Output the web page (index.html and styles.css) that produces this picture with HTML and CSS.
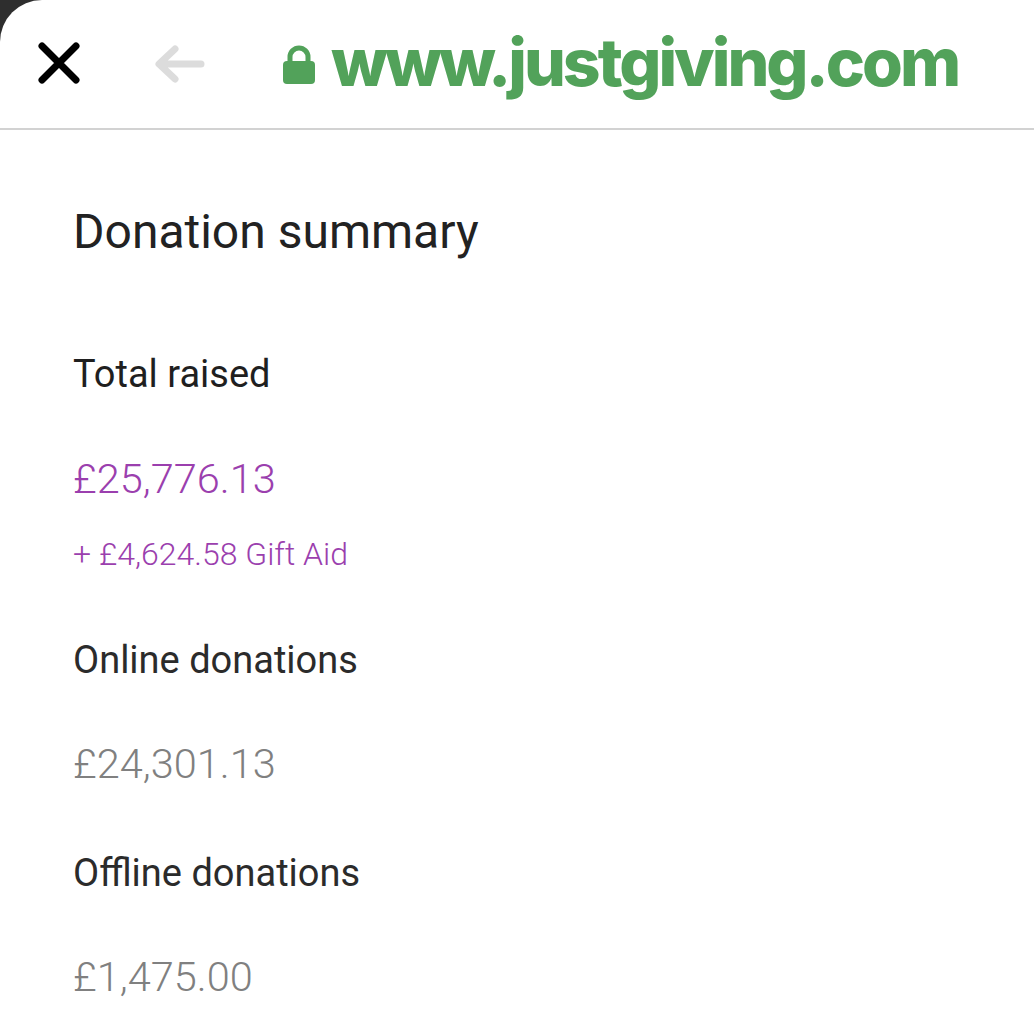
FILE: index.html
```html
<!DOCTYPE html>
<html lang="en">
<head>
  <meta charset="UTF-8" />
  <meta name="viewport" content="width=device-width, initial-scale=1.0" />
  <title>JustGiving - Donation summary</title>
  <link rel="stylesheet" href="styles.css">
</head>
<body>

  <div class="sheet">
    <!-- Barra do navegador -->
    <header class="browser-bar">
      <button class="icon-btn close" aria-label="Close">
        <svg width="48" height="48" viewBox="0 0 48 48">
          <path d="M7 7 L41 41 M41 7 L7 41" stroke="#000" stroke-width="7" stroke-linecap="round" fill="none"/>
        </svg>
      </button>
      <button class="icon-btn back" aria-label="Back">
        <svg width="52" height="40" viewBox="0 0 52 40">
          <path d="M48 20 H8 M22 5 L6 20 L22 35" stroke="#dcdcdc" stroke-width="7" stroke-linecap="round" stroke-linejoin="round" fill="none"/>
        </svg>
      </button>
      <div class="address">
        <svg class="lock" width="34" height="40" viewBox="0 0 34 40">
          <path d="M8 17 V12 a9 9 0 0 1 18 0 V17" stroke="#52a25a" stroke-width="5" fill="none"/>
          <rect x="1" y="16" width="32" height="23" rx="4" fill="#52a25a"/>
        </svg>
        <span class="url">www.justgiving.com</span>
      </div>
    </header>

    <!-- Resumo -->
    <main class="summary">
      <h1>Donation summary</h1>

      <div class="group">
        <h2 class="label strong">Total raised</h2>
        <p class="amount total">£25,776.13</p>
        <p class="gift-aid">+ £4,624.58 Gift Aid</p>
      </div>

      <div class="group">
        <h2 class="label">Online donations</h2>
        <p class="amount">£24,301.13</p>
      </div>

      <div class="group">
        <h2 class="label">Offline donations</h2>
        <p class="amount">£1,475.00</p>
      </div>
    </main>
  </div>

</body>
</html>
```

FILE: styles.css
```css
* {
  box-sizing: border-box;
  margin: 0;
  padding: 0;
}

body {
  background: #2e2e2e;
  font-family: Roboto, 'Noto Sans', sans-serif;
  min-height: 100vh;
  overflow: hidden;
}

.sheet {
  background: #fff;
  min-height: 100vh;
  border-top-left-radius: 42px;
}

/* Barra do navegador */
.browser-bar {
  display: flex;
  align-items: center;
  height: 130px;
  border-bottom: 2px solid #d2d2d2;
  padding-left: 35px;
}

.icon-btn {
  background: none;
  border: none;
  display: flex;
  align-items: center;
}

.close {
  margin-right: 70px;
  margin-top: -2px;
}

.back {
  margin-right: 77px;
}

.address {
  display: flex;
  align-items: center;
  gap: 15px;
}

.lock {
  margin-top: 2px;
}

.url {
  font-family: Inter, 'DejaVu Sans', sans-serif;
  font-weight: 800;
  font-size: 66px;
  color: #52a25a;
  letter-spacing: -3px;
  margin-top: -4px;
}

/* Resumo */
.summary {
  padding: 72px 73px 0;
}

h1 {
  font-weight: 400;
  font-size: 48px;
  line-height: 60px;
  color: #222;
  margin-bottom: 87px;
}

.label {
  font-weight: 400;
  font-size: 38px;
  line-height: 50px;
  color: #2b2b2b;
}

.label.strong {
  color: #1f1f1f;
}

.amount {
  font-weight: 300;
  font-size: 41.5px;
  line-height: 52px;
  color: #808080;
  margin-top: 53px;
}

.amount.total {
  color: #9b3fae;
  margin-top: 54px;
}

.gift-aid {
  font-weight: 300;
  font-size: 32px;
  line-height: 40px;
  color: #9b3fae;
  margin-top: 29px;
}

.group + .group {
  margin-top: 61px;
}

.group:last-child {
  margin-top: 58px;
}
```
